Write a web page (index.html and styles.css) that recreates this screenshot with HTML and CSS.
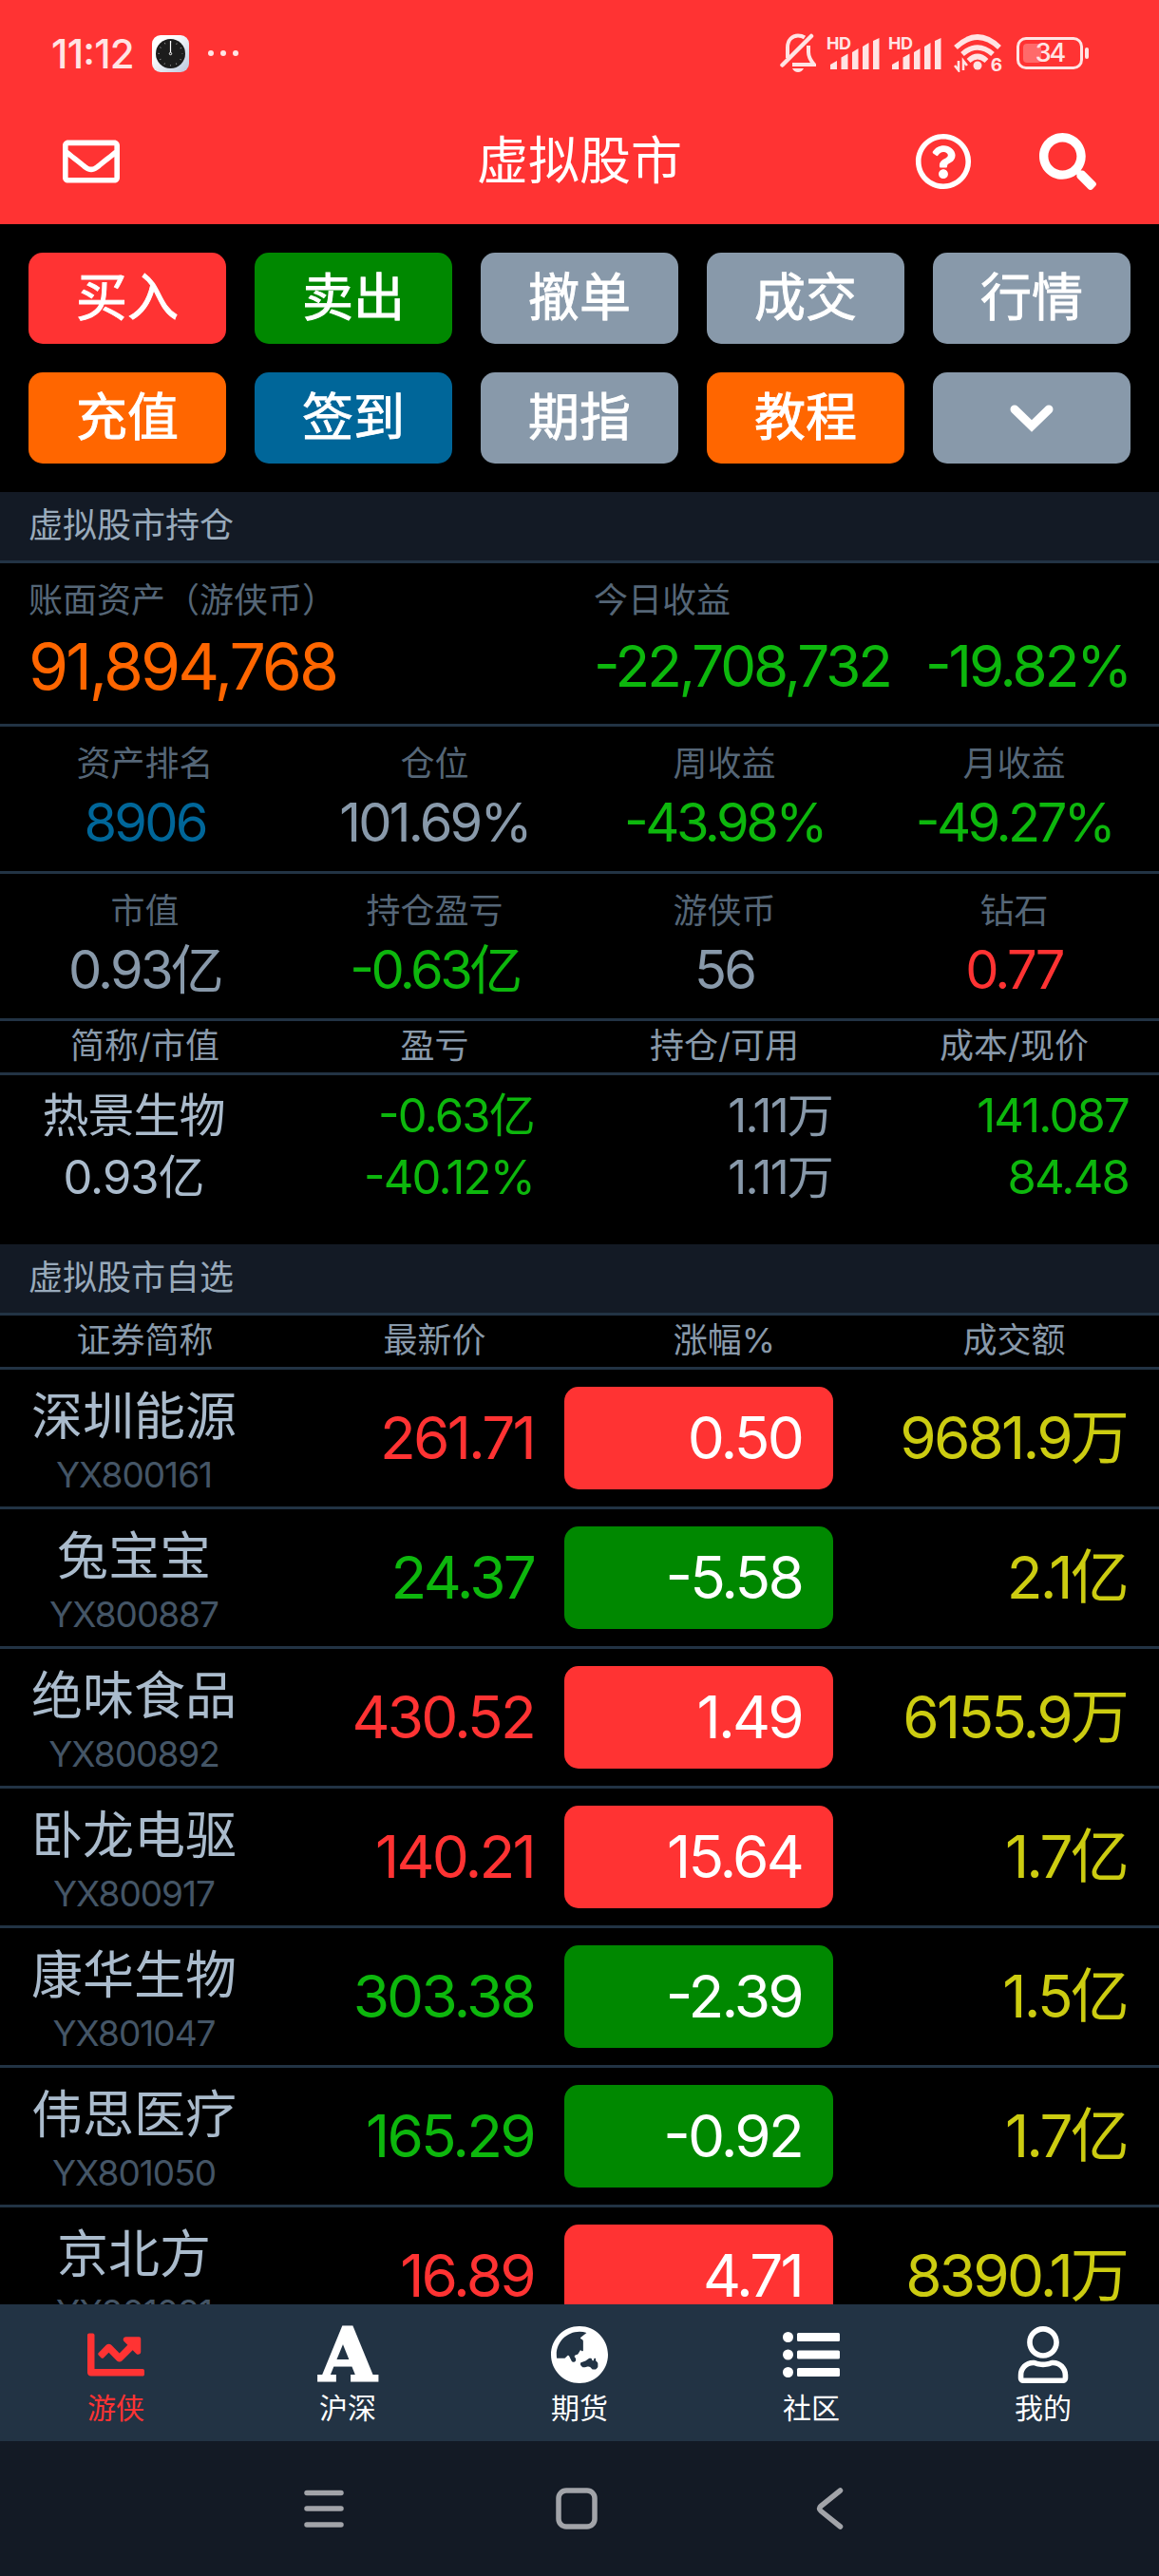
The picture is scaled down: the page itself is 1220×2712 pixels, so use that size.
FILE: index.html
```html
<!DOCTYPE html>
<html lang="zh-CN">
<head>
    <meta charset="UTF-8">
    <meta name="viewport" content="width=device-width, initial-scale=1.0">
    <title>虚拟股市</title>
    <link rel="stylesheet" href="styles.css">
</head>
<body>
    <div class="status-bar">
        <span class="time">11:12</span>
        <svg class="clock-app" viewBox="0 0 39 39">
            <defs>
                <linearGradient id="clockBg" x1="0" y1="0" x2="1" y2="1">
                    <stop offset="0.3" stop-color="#fff"/>
                    <stop offset="1" stop-color="#b9c6dc"/>
                </linearGradient>
            </defs>
            <rect width="39" height="39" rx="9" fill="url(#clockBg)"/>
            <circle cx="19.5" cy="19.5" r="15.5" fill="#1c1c1c"/>
            <circle cx="19.5" cy="19.5" r="12.3" fill="none" stroke="#999" stroke-width="1.6" stroke-dasharray="0.8 5.64" stroke-dashoffset="0.4"/>
            <path d="M19.5 6v12" stroke="#fff" stroke-width="1.2"/>
            <circle cx="19.5" cy="19.5" r="1.2" fill="none" stroke="#fff"/>
        </svg>
        <svg class="more" viewBox="0 0 34 8"><circle cx="4" cy="4" r="3"/><circle cx="17" cy="4" r="3"/><circle cx="30" cy="4" r="3"/></svg>
        <div class="status-icons">
            <svg class="bell" viewBox="0 0 38 42">
                <path d="M8 26V15C8 7 13 2.500 19 2.500q4 0 7 2M30 13v7q0 6 6 13H13" fill="none" stroke="currentColor" stroke-width="4"/>
                <path d="M2.500 33.500L33 3" fill="none" stroke="currentColor" stroke-width="4.500" stroke-linecap="round"/>
                <path d="M13 37h12q-2 4-6 4t-6-4z" fill="currentColor"/>
            </svg>
            <div class="signal">
                <span class="hd">HD</span>
                <svg viewBox="0 0 52 33"><path d="M0 28l7-4v9H0zM11.500 20.500l7-4V33h-7zM23 15l6.500-4v22H23zM34 9l6.500-4v28H34zM45 3l6.500-3v33H45z"/></svg>
            </div>
            <div class="signal">
                <span class="hd">HD</span>
                <svg viewBox="0 0 52 33"><path d="M0 28l7-4v9H0zM11.500 20.500l7-4V33h-7zM23 15l6.500-4v22H23zM34 9l6.500-4v28H34zM45 3l6.500-3v33H45z"/></svg>
            </div>
            <div class="wifi">
                <svg viewBox="0 0 51 40">
                    <path d="M2 14Q25 -8 48 14M9 21Q25 7 41 21M15.500 28Q25 19 34.500 28" fill="none" stroke="currentColor" stroke-width="5.500"/>
                    <circle cx="25" cy="33" r="4.500" fill="currentColor"/>
                    <path d="M5 28v10l-4-5M10 38V28l4 5" fill="none" stroke="currentColor" stroke-width="2.600"/>
                </svg>
                <span class="wifi-gen">6</span>
            </div>
            <div class="battery"><span class="battery-level"></span><span class="battery-text">34</span></div>
        </div>
    </div>

    <header class="header">
        <svg class="icon" viewBox="0 0 512 512"><path d="M464 64H48C21.490 64 0 85.490 0 112v288c0 26.510 21.490 48 48 48h416c26.510 0 48-21.490 48-48V112c0-26.510-21.490-48-48-48zm0 48v40.805c-22.422 18.259-58.168 46.651-134.587 106.490-16.841 13.247-50.201 45.072-73.413 44.701-23.208.375-56.579-31.459-73.413-44.701C106.180 199.465 70.425 171.067 48 152.805V112h416zM48 400V214.398c22.914 18.251 55.409 43.862 104.938 82.646 21.857 17.205 60.134 55.186 103.062 54.955 42.717.231 80.509-37.199 103.053-54.947 49.528-38.783 82.032-64.401 104.947-82.653V400H48z"/></svg>
        <h1>虚拟股市</h1>
        <div class="header-actions">
            <svg class="icon" viewBox="0 0 512 512"><path d="M256 8C119.043 8 8 119.083 8 256c0 136.997 111.043 248 248 248s248-111.003 248-248C504 119.083 392.957 8 256 8zm0 448c-110.532 0-200-89.431-200-200 0-110.495 89.472-200 200-200 110.491 0 200 89.471 200 200 0 110.530-89.431 200-200 200zm107.244-255.200c0 67.052-72.421 68.084-72.421 92.863V300c0 6.627-5.373 12-12 12h-45.647c-6.627 0-12-5.373-12-12v-8.659c0-35.745 27.100-50.034 47.579-61.516 17.561-9.845 28.324-16.541 28.324-29.579 0-17.246-21.999-28.693-39.784-28.693-23.189 0-33.894 10.977-48.942 29.969-4.057 5.120-11.460 6.071-16.666 2.124l-27.824-21.098c-5.107-3.872-6.251-11.066-2.644-16.363C184.846 131.491 214.940 112 261.794 112c49.071 0 101.450 38.304 101.450 88.800zM298 368c0 23.159-18.841 42-42 42s-42-18.841-42-42 18.841-42 42-42 42 18.841 42 42z"/></svg>
            <svg class="icon" viewBox="0 0 512 512"><path d="M505 442.700L405.300 343c-4.500-4.500-10.600-7-17-7H372c27.600-35.300 44-79.700 44-128C416 93.100 322.900 0 208 0S0 93.100 0 208s93.100 208 208 208c48.300 0 92.700-16.400 128-44v16.300c0 6.400 2.500 12.500 7 17l99.700 99.700c9.400 9.400 24.600 9.400 33.900 0l28.300-28.300c9.400-9.400 9.400-24.600.1-34zM208 336c-70.700 0-128-57.200-128-128 0-70.700 57.200-128 128-128 70.700 0 128 57.200 128 128 0 70.700-57.200 128-128 128z"/></svg>
        </div>
    </header>

    <main class="content">
        <div class="actions">
            <button class="btn btn-red">买入</button>
            <button class="btn btn-green">卖出</button>
            <button class="btn">撤单</button>
            <button class="btn">成交</button>
            <button class="btn">行情</button>
            <button class="btn btn-orange">充值</button>
            <button class="btn btn-blue">签到</button>
            <button class="btn">期指</button>
            <button class="btn btn-orange">教程</button>
            <button class="btn"><svg class="chevron" viewBox="0 0 46 30"><path d="M5 6l18 17.500L41 6" fill="none" stroke="#fff" stroke-width="9" stroke-linecap="round"/></svg></button>
        </div>

        <h2 class="section-title">虚拟股市持仓</h2>
        <div class="assets">
            <div class="asset">
                <div class="label">账面资产（游侠币）</div>
                <div class="total orange">91,894,768</div>
            </div>
            <div class="asset">
                <div class="label">今日收益</div>
                <div class="today green"><span>-22,708,732</span><span>-19.82%</span></div>
            </div>
        </div>
        <div class="stats">
            <div class="stat"><div class="label">资产排名</div><div class="value blue">8906</div></div>
            <div class="stat"><div class="label">仓位</div><div class="value">101.69%</div></div>
            <div class="stat"><div class="label">周收益</div><div class="value green">-43.98%</div></div>
            <div class="stat"><div class="label">月收益</div><div class="value green">-49.27%</div></div>
        </div>
        <div class="stats">
            <div class="stat"><div class="label">市值</div><div class="value">0.93亿</div></div>
            <div class="stat"><div class="label">持仓盈亏</div><div class="value green">-0.63亿</div></div>
            <div class="stat"><div class="label">游侠币</div><div class="value">56</div></div>
            <div class="stat"><div class="label">钻石</div><div class="value red">0.77</div></div>
        </div>
        <div class="table-head"><span>简称/市值</span><span>盈亏</span><span>持仓/可用</span><span>成本/现价</span></div>
        <div class="holding">
            <div class="holding-name">热景生物<br>0.93亿</div>
            <div class="holding-profit green">-0.63亿<br>-40.12%</div>
            <div class="holding-count">1.11万<br>1.11万</div>
            <div class="holding-cost green">141.087<br>84.48</div>
        </div>

        <h2 class="section-title">虚拟股市自选</h2>
        <div class="table-head"><span>证券简称</span><span>最新价</span><span>涨幅%</span><span>成交额</span></div>
        <div class="stock">
            <div class="stock-name">深圳能源<small>YX800161</small></div>
            <div class="price red">261.71</div><div class="change up">0.50</div><div class="amount">9681.9万</div>
        </div>
        <div class="stock">
            <div class="stock-name">兔宝宝<small>YX800887</small></div>
            <div class="price green">24.37</div><div class="change down">-5.58</div><div class="amount">2.1亿</div>
        </div>
        <div class="stock">
            <div class="stock-name">绝味食品<small>YX800892</small></div>
            <div class="price red">430.52</div><div class="change up">1.49</div><div class="amount">6155.9万</div>
        </div>
        <div class="stock">
            <div class="stock-name">卧龙电驱<small>YX800917</small></div>
            <div class="price red">140.21</div><div class="change up">15.64</div><div class="amount">1.7亿</div>
        </div>
        <div class="stock">
            <div class="stock-name">康华生物<small>YX801047</small></div>
            <div class="price green">303.38</div><div class="change down">-2.39</div><div class="amount">1.5亿</div>
        </div>
        <div class="stock">
            <div class="stock-name">伟思医疗<small>YX801050</small></div>
            <div class="price green">165.29</div><div class="change down">-0.92</div><div class="amount">1.7亿</div>
        </div>
        <div class="stock">
            <div class="stock-name">京北方<small>YX801091</small></div>
            <div class="price red">16.89</div><div class="change up">4.71</div><div class="amount">8390.1万</div>
        </div>
    </main>

    <nav class="tabs">
        <a class="tab active">
            <svg class="icon" viewBox="0 0 512 512"><path d="M496 384H64V80c0-8.840-7.160-16-16-16H16C7.160 64 0 71.160 0 80v336c0 17.670 14.330 32 32 32h464c8.840 0 16-7.160 16-16v-32c0-8.840-7.160-16-16-16zM464 96H345.940c-21.380 0-32.090 25.850-16.970 40.970l32.400 32.400L288 242.750l-73.370-73.370c-12.500-12.500-32.760-12.500-45.250 0l-68.690 68.690c-6.250 6.250-6.250 16.380 0 22.630l22.620 22.620c6.250 6.250 16.380 6.250 22.630 0L192 237.250l73.370 73.370c12.500 12.500 32.760 12.500 45.250 0l96-96 32.400 32.400c15.120 15.120 40.970 4.410 40.970-16.970V112c.010-8.840-7.150-16-15.990-16z"/></svg>
            游侠
        </a>
        <a class="tab"><span class="icon letter">A</span>沪深</a>
        <a class="tab">
            <svg class="icon" viewBox="0 8 496 496"><path d="M248 8C111.030 8 0 119.030 0 256s111.030 248 248 248 248-111.030 248-248S384.970 8 248 8zm-11.340 240.230c-2.890 4.820-8.100 7.770-13.720 7.770h-.31c-4.240 0-8.310 1.690-11.310 4.690l-5.660 5.660c-3.120 3.120-3.120 8.190 0 11.310l5.660 5.660c3 3 4.690 7.070 4.690 11.310V304c0 8.840-7.160 16-16 16h-6.110c-6.060 0-11.600-3.420-14.310-8.850l-22.620-45.230c-2.440-4.880-8.950-5.940-12.810-2.080l-19.470 19.460c-3 3-7.070 4.690-11.310 4.690H50.810C49.120 277.550 48 266.920 48 256c0-110.280 89.720-200 200-200 21.510 0 42.200 3.510 61.630 9.820l-50.160 38.530c-5.110 3.410-4.630 11.060.86 13.810l10.830 5.410c5.420 2.710 8.840 8.250 8.840 14.310V216c0 4.420-3.580 8-8 8h-3.060c-3.030 0-5.800-1.710-7.150-4.420-1.560-3.120-5.960-3.290-7.760-.3l-17.370 28.950zM408 358.430c0 4.240-1.690 8.310-4.690 11.310l-9.570 9.570c-3 3-7.070 4.690-11.310 4.690h-15.160c-4.240 0-8.310-1.690-11.310-4.690l-13.010-13.010a26.767 26.767 0 0 0-25.420-7.040l-21.270 5.320c-1.270.32-2.570.48-3.880.48h-10.340c-4.240 0-8.310-1.690-11.310-4.690l-11.910-11.910a8.008 8.008 0 0 1-2.340-5.660v-10.200c0-3.270 1.990-6.210 5.030-7.430l39.340-15.740c1.980-.79 3.860-1.820 5.590-3.050l23.710-16.890a7.978 7.978 0 0 1 4.640-1.480h12.090c3.230 0 6.150 1.940 7.390 4.930l5.350 12.850a4 4 0 0 0 3.690 2.460h3.800c1.780 0 3.350-1.180 3.840-2.880l4.200-14.470c.5-1.710 2.060-2.880 3.840-2.880h6.060c2.210 0 4 1.790 4 4v12.930c0 2.120.84 4.160 2.340 5.660l11.910 11.910c3 3 4.690 7.070 4.690 11.310v24.600z"/></svg>
            期货
        </a>
        <a class="tab">
            <svg class="icon" viewBox="0 0 60 60">
                <circle cx="5.500" cy="11.500" r="5.500"/><circle cx="5.500" cy="30" r="5.500"/><circle cx="5.500" cy="48.500" r="5.500"/>
                <rect x="15" y="7" width="45" height="9" rx="1.500"/><rect x="15" y="25.500" width="45" height="9" rx="1.500"/><rect x="15" y="44" width="45" height="9" rx="1.500"/>
            </svg>
            社区
        </a>
        <a class="tab">
            <svg class="icon" viewBox="0 0 448 512"><path d="M313.600 304c-28.700 0-42.500 16-89.600 16-47.100 0-60.800-16-89.600-16C60.200 304 0 364.200 0 438.400V464c0 26.500 21.500 48 48 48h352c26.500 0 48-21.500 48-48v-25.600c0-74.200-60.200-134.400-134.400-134.400zM400 464H48v-25.600c0-47.600 38.800-86.400 86.400-86.400 14.600 0 38.300 16 89.600 16 51.700 0 74.900-16 89.600-16 47.600 0 86.400 38.800 86.400 86.400V464zM224 288c79.500 0 144-64.500 144-144S303.500 0 224 0 80 64.500 80 144s64.500 144 144 144zm0-240c52.900 0 96 43.100 96 96s-43.100 96-96 96-96-43.100-96-96 43.100-96 96-96z"/></svg>
            我的
        </a>
    </nav>

    <div class="system-nav">
        <svg viewBox="0 0 44 44"><path d="M4 5.500h36M4 22h36M4 39h36"/></svg>
        <svg viewBox="0 0 44 44"><rect x="3" y="3" width="38" height="38" rx="8"/></svg>
        <svg viewBox="0 0 44 44"><path d="M33.500 3L13 19.500q-3 2.500 0 5L33.500 41"/></svg>
    </div>
</body>
</html>
```
FILE: styles.css
```css
* {
    box-sizing: border-box;
}
body {
    width: 1220px;
    height: 2712px;
    margin: 0;
    display: flex;
    flex-direction: column;
    overflow: hidden;
    background-color: #000;
    color: #89a;
    font-family: Inter, "Noto Sans CJK SC", sans-serif;
    font-size: 36px;
    font-feature-settings: "case";
}
svg {
    display: block;
    fill: currentColor;
    flex: none;
}
.icon {
    width: 60px;
    height: 60px;
}

/* status bar */
.status-bar {
    height: 112px;
    flex: none;
    display: flex;
    align-items: center;
    padding: 0 80px 0 54px;
    background-color: #f33;
    color: #ffe4e4;
}
.time {
    width: 106px;
    font-size: 42px;
    font-weight: 500;
    letter-spacing: -0.8px;
}
.clock-app {
    width: 39px;
    height: 39px;
}
.more {
    width: 34px;
    height: 8px;
    margin-left: 19px;
}
.status-icons {
    display: flex;
    align-items: center;
    margin-left: auto;
}
.bell {
    width: 38px;
    height: 42px;
    margin-right: 15px;
}
.signal {
    position: relative;
    width: 52px;
    height: 33px;
    margin-right: 13px;
}
.signal svg {
    width: 52px;
    height: 33px;
}
.hd {
    position: absolute;
    left: -4px;
    top: -3px;
    font-size: 18px;
    font-weight: 700;
    line-height: 18px;
    letter-spacing: -0.5px;
}
.wifi {
    position: relative;
    width: 51px;
    height: 40px;
    margin-right: 15px;
}
.wifi svg {
    width: 51px;
    height: 40px;
}
.wifi-gen {
    position: absolute;
    right: 0;
    bottom: -1px;
    font-size: 19px;
    font-weight: 700;
    line-height: 16px;
}
.battery {
    position: relative;
    width: 70px;
    height: 34px;
    border: 3px solid #ffe4e4;
    border-radius: 10px;
    text-align: center;
}
.battery::after {
    content: "";
    position: absolute;
    right: -9px;
    top: 8px;
    width: 4px;
    height: 12px;
    border-radius: 2px;
    background-color: #ffe4e4;
}
.battery-level {
    position: absolute;
    left: 4px;
    top: 4px;
    width: 19px;
    height: 20px;
    border-radius: 4px;
    background-color: #ff6a6a;
}
.battery-text {
    position: relative;
    display: block;
    font-size: 27px;
    font-weight: 500;
    line-height: 28px;
    letter-spacing: -2px;
}

/* header */
.header {
    height: 124px;
    flex: none;
    display: grid;
    grid-template-columns: 1fr auto 1fr;
    align-items: center;
    padding: 0 66px 9px;
    background-color: #f33;
    color: #fff;
}
.header h1 {
    margin: 0;
    font-size: 54px;
    font-weight: 400;
    line-height: 60px;
}
.header-actions {
    display: flex;
    justify-content: flex-end;
    gap: 71px;
}

.content {
    flex: 1;
    min-height: 0;
    overflow: hidden;
}

/* buttons */
.actions {
    display: grid;
    grid-template-columns: repeat(5, 208px);
    gap: 30px;
    padding: 30px;
}
.btn {
    height: 96px;
    padding: 0;
    display: flex;
    align-items: center;
    justify-content: center;
    border: none;
    border-radius: 15px;
    background-color: #89a;
    color: #fff;
    font-family: inherit;
    font-size: 54px;
    font-weight: 400;
    line-height: 1;
    -webkit-text-stroke: 0.9px #fff;
}
.btn-red { background-color: #f33; }
.btn-green { background-color: #080; }
.btn-orange { background-color: #f60; }
.btn-blue { background-color: #069; }
.chevron {
    width: 46px;
    height: 30px;
}

.red { color: #f33 !important; }
.green { color: #0db70d !important; }
.blue { color: #069 !important; }
.orange { color: #f60 !important; }

.section-title {
    height: 75px;
    margin: 0;
    padding-left: 30px;
    border-bottom: 3px solid #234;
    background-color: #131a25;
    color: #9ab;
    font-size: 36px;
    font-weight: 400;
    line-height: 71px;
}

/* account */
.label {
    color: #567;
    line-height: 48px;
}
.assets {
    height: 172px;
    display: grid;
    grid-template-columns: 595px 1fr;
    padding: 15px 30px 0;
    border-bottom: 3px solid #234;
}
.total, .today {
    height: 90px;
    line-height: 90px;
}
.total {
    font-size: 68px;
    letter-spacing: -3px;
}
.today {
    display: flex;
    gap: 37px;
    font-size: 60px;
    letter-spacing: -3px;
}
.stats {
    height: 155px;
    display: grid;
    grid-template-columns: repeat(4, 1fr);
    padding-top: 15px;
    border-bottom: 3px solid #234;
    text-align: center;
}
.value {
    font-size: 56px;
    line-height: 76px;
    letter-spacing: -2.8px;
}
.value.green {
    letter-spacing: -3.5px;
}

/* tables */
.table-head {
    height: 57px;
    display: grid;
    grid-template-columns: repeat(4, 1fr);
    border-bottom: 3px solid #234;
    line-height: 52px;
    text-align: center;
}
.holding {
    height: 178px;
    display: grid;
    grid-template-columns: 281px 281px 314px 312px;
    padding-top: 10px;
    font-size: 49px;
    line-height: 65px;
    letter-spacing: -1.8px;
    text-align: right;
}
.holding-name {
    color: #abc;
    letter-spacing: -1px;
    text-align: center;
}
.stock {
    height: 147px;
    display: grid;
    grid-template-columns: 282px 280px 315px 309px;
    align-items: start;
    padding-top: 18px;
    border-bottom: 3px solid #234;
    font-size: 62px;
    line-height: 108px;
    letter-spacing: -2.8px;
    text-align: right;
}
.stock-name {
    margin-top: -2px;
    color: #abc;
    font-size: 54px;
    line-height: 68px;
    letter-spacing: 0;
    text-align: center;
}
.stock-name small {
    display: block;
    color: #456;
    font-size: 37px;
    line-height: 54px;
    letter-spacing: -1px;
}
.change {
    height: 108px;
    margin-left: 32px;
    padding-right: 33px;
    border-radius: 15px;
    color: #fff;
}
.up { background-color: #f33; }
.down { background-color: #080; }
.amount {
    color: #cc1;
}

/* bottom tabs */
.tabs {
    height: 144px;
    flex: none;
    display: grid;
    grid-template-columns: repeat(5, 1fr);
    background-color: #234;
    color: #fff;
}
.tab {
    display: flex;
    flex-direction: column;
    align-items: center;
    padding-top: 23px;
    font-size: 30px;
    line-height: 52px;
}
.tab.active {
    color: #f33;
}
.letter {
    display: flex;
    justify-content: center;
    font-family: "DejaVu Serif", serif;
    font-size: 77px;
    font-weight: 700;
    line-height: 60px;
    -webkit-text-stroke: 3px #fff;
}
.system-nav {
    height: 142px;
    flex: none;
    display: flex;
    justify-content: center;
    gap: 222px;
    padding: 49px 6px 0 0;
    background-color: #131a25;
    color: #a2a4a9;
}
.system-nav svg {
    width: 44px;
    height: 44px;
    fill: none;
    stroke: currentColor;
    stroke-width: 5.5;
    stroke-linecap: round;
}
```
